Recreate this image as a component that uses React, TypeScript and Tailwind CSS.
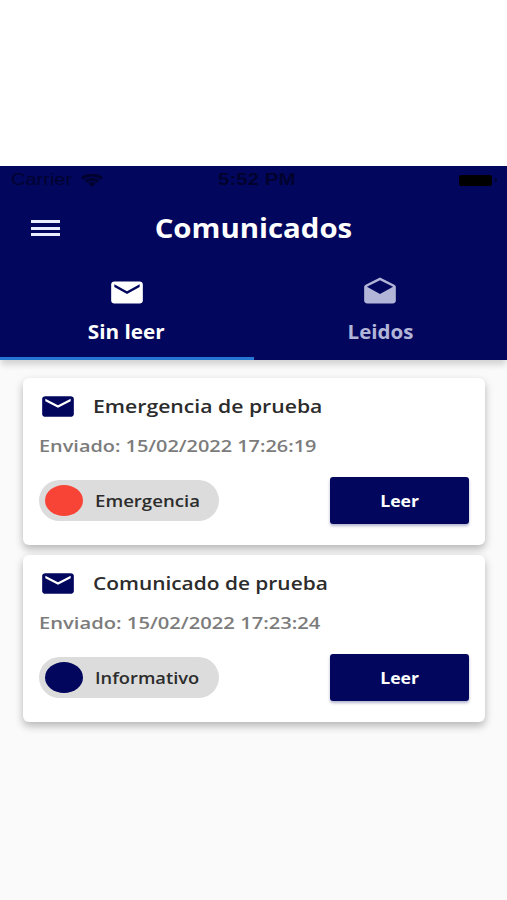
import React from "react";

type Notice = {
  title: string;
  titleStretch: string;
  sent: string;
  sentStretch: string;
  kind: string;
  kindStretch: string;
  dot: string;
};

const notices: Notice[] = [
  {
    title: "Emergencia de prueba",
    titleStretch: "scale-x-[1.177]",
    sent: "Enviado: 15/02/2022 17:26:19",
    sentStretch: "scale-x-[1.17]",
    kind: "Emergencia",
    kindStretch: "scale-x-[1.2]",
    dot: "bg-[#f84436]",
  },
  {
    title: "Comunicado de prueba",
    titleStretch: "scale-x-[1.16]",
    sent: "Enviado: 15/02/2022 17:23:24",
    sentStretch: "scale-x-[1.187]",
    kind: "Informativo",
    kindStretch: "scale-x-[1.18]",
    dot: "bg-[#02075d]",
  },
];

const App = () => {
  return (
    <div className="flex h-[900px] w-[507px] flex-col overflow-hidden bg-[#fafafa] font-['Open_Sans',sans-serif]">
      <div className="h-[166px] shrink-0 bg-white" />

      {/* header */}
      <header className="flex h-[194px] shrink-0 flex-col bg-[#02075d] shadow-[0_6px_6px_-1px_rgba(0,0,0,0.15)]">
        <StatusBar />
        <div className="grid h-[68px] grid-cols-[507px] items-center">
          <div className="col-start-1 row-start-1 ml-[31px] flex w-[29px] flex-col gap-[3.5px]">
            <span className="h-[3px] bg-[#e9edfc]" />
            <span className="h-[3px] bg-[#e9edfc]" />
            <span className="h-[3px] bg-[#e9edfc]" />
          </div>
          <h1 className="col-start-1 row-start-1 flex justify-center text-[26px] leading-8 font-bold text-white">
            <span className="scale-x-[1.13]">Comunicados</span>
          </h1>
        </div>
        <nav className="grid flex-1 grid-cols-2">
          <div className="flex flex-col items-center border-b-[3px] border-[#2477d2] pt-[14px] text-white">
            <Mail className="h-[33px] w-[38px]" />
            <span className="mt-[11px] scale-x-[1.09] text-[19px] leading-6 font-bold">Sin leer</span>
          </div>
          <div className="flex flex-col items-center pt-[14px] text-[#b3b5d8]">
            <Drafts className="h-[33px] w-[38px]" />
            <span className="mt-[11px] scale-x-[1.08] text-[19px] leading-6 font-bold">Leidos</span>
          </div>
        </nav>
      </header>

      {/* notices */}
      <main className="flex flex-col gap-[10px] pt-[18px] pr-[22px] pl-[23px]">
        {notices.map((notice) => (
          <NoticeCard key={notice.title} notice={notice} />
        ))}
      </main>
    </div>
  );
};

export default App;

const StatusBar = () => {
  return (
    <div className="grid h-7 shrink-0 grid-cols-3 items-center pr-[10px] pl-[11px] font-['Liberation_Sans',sans-serif] text-[#01022e]">
      <div className="flex items-center gap-[21px]">
        <span className="origin-left scale-x-[1.25] text-[16px] leading-5">Carrier</span>
        <svg className="h-[13px] w-[22px]" viewBox="0 0 22 13" fill="none" stroke="currentColor" strokeWidth="3">
          <path d="M1 4.2Q11-2 21 4.2M4.500 7.500Q11 3 17.500 7.500" />
          <path d="M7.200 9.200Q11 7 14.800 9.200L11 13Z" fill="currentColor" stroke="none" />
        </svg>
      </div>
      <span className="scale-x-[1.28] justify-self-center pl-1 text-[16px] leading-5 font-bold">5:52 PM</span>
      <div className="flex items-center gap-[3px] justify-self-end">
        <span className="h-[11px] w-[33px] rounded-[2px] bg-black" />
        <span className="h-1 w-[2px] rounded-r bg-[#01022e]" />
      </div>
    </div>
  );
};

const NoticeCard = ({ notice }: { notice: Notice }) => {
  return (
    <article className="flex h-[167px] flex-col rounded-[6px] bg-white px-4 shadow-[0_4px_8px_rgba(0,0,0,0.28)]">
      <div className="flex h-[56px] items-center gap-4">
        <Mail className="h-[31px] w-[38px] text-[#02075d]" />
        <h2 className={`origin-left whitespace-nowrap text-[18px] leading-6 font-semibold text-[#2c2c2c] ${notice.titleStretch}`}>
          {notice.title}
        </h2>
      </div>
      <p className={`origin-left self-start whitespace-nowrap text-[17px] leading-6 font-semibold text-[#7c7c7c] ${notice.sentStretch}`}>
        {notice.sent}
      </p>
      <div className="mt-[19px] flex items-center justify-between">
        <div className="flex h-[41px] w-[180px] items-center rounded-full bg-[#dcdcdc] pl-[6px]">
          <span className={`h-[31px] w-[38px] rounded-[50%] ${notice.dot}`} />
          <span className={`ml-3 origin-left text-[15.5px] leading-5 font-semibold text-[#2c2c2c] ${notice.kindStretch}`}>
            {notice.kind}
          </span>
        </div>
        <button className="flex h-[47px] w-[139px] items-center justify-center rounded-[3px] bg-[#02075d] text-white shadow-[0_2px_3px_rgba(2,7,93,0.3)]">
          <span className="scale-x-[1.1] text-[16px] leading-5 font-bold">Leer</span>
        </button>
      </div>
    </article>
  );
};

const Mail = ({ className }: { className: string }) => {
  return (
    <svg className={className} viewBox="0 0 24 24" preserveAspectRatio="none" fill="currentColor">
      <path d="M20 4H4c-1.100 0-1.990.9-1.990 2L2 18c0 1.100.9 2 2 2h16c1.100 0 2-.9 2-2V6c0-1.100-.9-2-2-2zm0 4l-8 5-8-5V6l8 5 8-5v2z" />
    </svg>
  );
};

const Drafts = ({ className }: { className: string }) => {
  return (
    <svg className={className} viewBox="0 0 24 24" preserveAspectRatio="none" fill="currentColor">
      <path d="M21.990 8c0-.72-.37-1.350-.94-1.700L12 1 2.950 6.300C2.380 6.650 2 7.280 2 8v10c0 1.100.9 2 2 2h16c1.100 0 2-.9 2-2l-.01-10zM12 13L3.740 7.840 12 3l8.260 4.840L12 13z" />
    </svg>
  );
};
